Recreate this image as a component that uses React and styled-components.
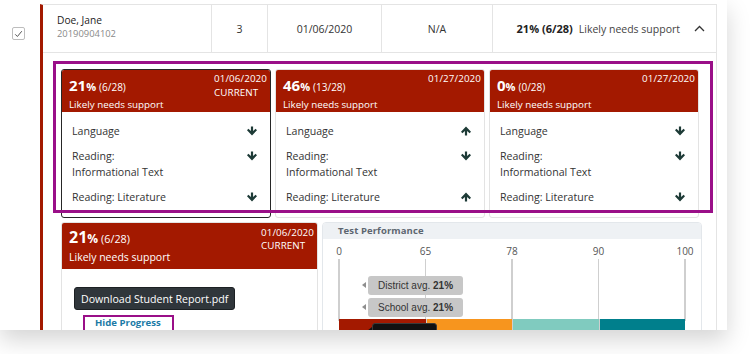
import React from 'react'
import styled, { createGlobalStyle } from 'styled-components'

const RED = '#a31900'
const PURPLE = '#9a0f88'

const GlobalStyle = createGlobalStyle`
  html, body { margin: 0; padding: 0; background: #fff; }
  body { font-family: "Open Sans", "Liberation Sans", sans-serif; color: #333; }
  * { box-sizing: border-box; }
`

const Screen = styled.div`
  width: 750px;
  height: 354px;
  overflow: hidden;
  background: #fff;
`

const Window = styled.div`
  width: 727px;
  height: 330px;
  overflow: hidden;
  background: #fff;
  box-shadow: 0 10px 22px rgba(0, 0, 0, 0.17);
  display: flex;
  padding-top: 4px;
`

const CheckCol = styled.div`
  width: 40px;
  flex: 0 0 40px;
  padding: 23px 0 0 12px;
`

const CheckBox = styled.div`
  width: 13px;
  height: 13px;
  border: 1px solid #bdbdbd;
  border-radius: 2px;
  display: flex;
  align-items: center;
  justify-content: center;
`

const Row = styled.div`
  width: 677px;
  flex: 0 0 677px;
  border-left: 3px solid ${RED};
  border-right: 1px solid #e4e4e4;
  border-top: 1px solid #e4e4e4;
`

const RowHeader = styled.div`
  display: flex;
  height: 48px;
  border-bottom: 1px solid #e4e4e4;
  font-size: 10.5px;
  color: #333;
`

const Cell = styled.div`
  width: ${p => p.$w}px;
  flex: 0 0 ${p => p.$w}px;
  border-right: 1px solid #e4e4e4;
  display: flex;
  align-items: center;
  justify-content: center;
`

const NameCell = styled(Cell)`
  flex-direction: column;
  align-items: flex-start;
  justify-content: flex-start;
  padding: 8px 0 0 14px;
`

const Name = styled.div`
  font-size: 10.2px;
  line-height: 14px;
  color: #222;
`

const StudentId = styled.div`
  font-size: 9.4px;
  line-height: 14px;
  color: #8a8a8a;
`

const ScoreCell = styled.div`
  flex: 1;
  display: flex;
  align-items: center;
  justify-content: flex-end;
  gap: 14px;
  padding-right: 11px;
`

const ScoreText = styled.div`
  color: #444;
  b { color: #222; font-weight: 700; font-size: 11px; margin-right: 6px; }
`

const Expanded = styled.div`
  padding: 16px 0 0 18px;
`

const CardsRow = styled.div`
  position: relative;
  display: flex;
  gap: 4px;
  width: max-content;
`

const Highlight = styled.div`
  position: absolute;
  top: -8px;
  left: -8px;
  right: -14px;
  bottom: 5px;
  border: 3px solid ${PURPLE};
  pointer-events: none;
`

const Card = styled.div`
  width: 210px;
  flex: 0 0 210px;
  border: ${p => (p.$selected ? '1.5px solid #262626' : '1px solid #e3e3e3')};
  border-radius: 3px;
  overflow: hidden;
  background: #fff;
`

const CardHead = styled.div`
  background: ${RED};
  color: #fff;
  display: flex;
  justify-content: space-between;
  padding: 1px 3px 0 7px;
  height: ${p => p.$h}px;
`

const HeadLeft = styled.div`
  padding-top: ${p => p.$top}px;
`

const Pct = styled.div`
  line-height: 18px;
  white-space: nowrap;
  b { font-size: ${p => p.$big}px; font-weight: 700; }
  i { font-style: normal; font-weight: 700; font-size: ${p => p.$big - 4}px; margin-right: 3px; }
  span { font-size: ${p => p.$small}px; }
`

const Status = styled.div`
  font-size: ${p => p.$size}px;
  line-height: 18px;
  white-space: nowrap;
`

const HeadRight = styled.div`
  font-size: 9.8px;
  line-height: ${p => p.$lh}px;
  padding-top: ${p => p.$top}px;
  letter-spacing: 0.1px;
`

const CardBody = styled.div`
  padding: 6px 13px 8px 10px;
`

const Skill = styled.div`
  display: flex;
  justify-content: space-between;
  align-items: flex-start;
  padding: 4.5px 0;
  font-size: 10.6px;
  line-height: 16px;
  color: #333;
  svg { margin-top: 3px; }
`

const BottomRow = styled.div`
  display: flex;
  gap: 4px;
  margin-top: 4px;
`

const SummaryCard = styled.div`
  width: 257px;
  flex: 0 0 257px;
  height: 120px;
  border: 1px solid #e3e3e3;
  border-radius: 3px;
  overflow: hidden;
`

const SummaryBody = styled.div`
  padding: 18px 0 0 12px;
`

const DownloadButton = styled.button`
  height: 23px;
  padding: 0 6px;
  background: #30363b;
  border: 1px solid #1c2023;
  border-radius: 3px;
  color: #fff;
  font-family: "Open Sans", sans-serif;
  font-size: 10.6px;
  display: block;
`

const HideLink = styled.div`
  margin: 5px 0 0 9px;
  width: 91px;
  height: 17px;
  border: 2.5px solid ${PURPLE};
  padding-left: 10px;
  color: #1b7aa6;
  font-weight: 700;
  font-size: 9.6px;
  line-height: 12px;
`

const PerfPanel = styled.div`
  width: 380px;
  flex: 0 0 380px;
  height: 120px;
  border: 1px solid #e3e7eb;
  border-radius: 4px;
  overflow: hidden;
`

const PerfHeader = styled.div`
  height: 16px;
  background: #eef1f4;
  padding-left: 15px;
  font-size: 9.5px;
  font-weight: 700;
  line-height: 16px;
  color: #5d6670;
  letter-spacing: 0.1px;
`

const Chart = styled.div`
  position: relative;
  margin-left: 16px;
  width: 346px;
  height: 110px;
`

const Tick = styled.div`
  position: absolute;
  left: ${p => p.$at}%;
  top: 6px;
  transform: translateX(-50%);
  font-size: 10px;
  line-height: 12px;
  color: #555;
`

const TickLine = styled.div`
  position: absolute;
  left: ${p => p.$at}%;
  top: 20px;
  height: 62px;
  width: 1.5px;
  margin-left: -0.75px;
  background: #cfcfcf;
`

const Bars = styled.div`
  position: absolute;
  top: 80px;
  left: 0;
  right: 0;
  height: 20px;
  display: grid;
  grid-template-columns: repeat(4, 1fr);
`

const Bar = styled.div`
  background: ${p => p.$color};
  border-left: ${p => (p.$first ? 'none' : '1.5px solid #cfcfcf')};
`

const AvgTag = styled.div`
  position: absolute;
  top: ${p => p.$top}px;
  left: 29px;
  height: 19px;
  padding: 0 10px;
  border-radius: 3px;
  background: #c7c7c7;
  font-family: "Liberation Sans", Arial, sans-serif;
  font-size: 10px;
  line-height: 19px;
  color: #333;
  white-space: nowrap;
  b { font-weight: 700; }
  &::before {
    content: '';
    position: absolute;
    left: -6px;
    top: 6px;
    border-top: 3.5px solid transparent;
    border-bottom: 3.5px solid transparent;
    border-right: 4px solid #8e8e8e;
  }
`

const Marker = styled.div`
  position: absolute;
  top: 84px;
  left: 33px;
  width: 65px;
  height: 24px;
  border-radius: 3px;
  background: #111;
  border: 1px solid #3a3a3a;
  &::before {
    content: '';
    position: absolute;
    left: -6px;
    top: 3px;
    border-top: 4px solid transparent;
    border-bottom: 4px solid transparent;
    border-right: 5px solid #111;
  }
`

const Arrow = ({ dir }) => (
  <svg width="10" height="10" viewBox="0 0 10 10" style={{ transform: dir === 'up' ? 'rotate(180deg)' : 'none' }}>
    <path d="M3.9 0.5h2.2v4.6L8.6 2.8 10 4.2 5 9.4 0 4.2 1.4 2.8 3.9 5.1z" fill="#1e3b37" />
  </svg>
)

const skills = [['Language'], ['Reading:', 'Informational Text'], ['Reading: Literature']]

const cards = [
  { pct: '21', frac: '(6/28)', date: '01/06/2020', current: true, arrows: ['down', 'down', 'down'] },
  { pct: '46', frac: '(13/28)', date: '01/27/2020', arrows: ['up', 'down', 'up'] },
  { pct: '0', frac: '(0/28)', date: '01/27/2020', arrows: ['down', 'down', 'down'] },
]

const ticks = [
  { label: '0', at: 0 },
  { label: '65', at: 25 },
  { label: '78', at: 50 },
  { label: '90', at: 75 },
  { label: '100', at: 100 },
]

const bars = ['#a31900', '#f7951e', '#80cbbf', '#007f8c']

export default function App() {
  return (
    <Screen>
      <GlobalStyle />
      <Window>
        <CheckCol>
          <CheckBox>
            <svg width="9" height="8" viewBox="0 0 9 8">
              <path d="M1.2 4.3l2.2 2.2L7.8 1.2" fill="none" stroke="#555" strokeWidth="1" />
            </svg>
          </CheckBox>
        </CheckCol>
        <Row>
          <RowHeader>
            <NameCell $w={169}>
              <Name>Doe, Jane</Name>
              <StudentId>20190904102</StudentId>
            </NameCell>
            <Cell $w={56}>3</Cell>
            <Cell $w={114}>01/06/2020</Cell>
            <Cell $w={111}>N/A</Cell>
            <ScoreCell>
              <ScoreText>
                <b>21% (6/28)</b>Likely needs support
              </ScoreText>
              <svg width="11" height="7" viewBox="0 0 11 7">
                <path d="M1 6l4.5-4.5L10 6" fill="none" stroke="#333" strokeWidth="1.3" />
              </svg>
            </ScoreCell>
          </RowHeader>

          <Expanded>
            <CardsRow>
              {cards.map((c, i) => (
                <Card key={i} $selected={c.current}>
                  <CardHead $h={42}>
                    <HeadLeft $top={5}>
                      <Pct $big={15} $small={10}>
                        <b>{c.pct}</b><i>%</i><span>{c.frac}</span>
                      </Pct>
                      <Status $size={9.8}>Likely needs support</Status>
                    </HeadLeft>
                    <HeadRight $lh={14} $top={1}>
                      <div>{c.date}</div>
                      {c.current && <div>CURRENT</div>}
                    </HeadRight>
                  </CardHead>
                  <CardBody>
                    {skills.map((s, j) => (
                      <Skill key={j}>
                        <div>
                          {s.map(line => <div key={line}>{line}</div>)}
                        </div>
                        <Arrow dir={c.arrows[j]} />
                      </Skill>
                    ))}
                  </CardBody>
                </Card>
              ))}
              <Highlight />
            </CardsRow>

            <BottomRow>
              <SummaryCard>
                <CardHead $h={46}>
                  <HeadLeft $top={4}>
                    <Pct $big={16} $small={10.8}>
                      <b>21</b><i>%</i><span>(6/28)</span>
                    </Pct>
                    <Status $size={10.5}>Likely needs support</Status>
                  </HeadLeft>
                  <HeadRight $lh={13} $top={2}>
                    <div>01/06/2020</div>
                    <div>CURRENT</div>
                  </HeadRight>
                </CardHead>
                <SummaryBody>
                  <DownloadButton>Download Student Report.pdf</DownloadButton>
                  <HideLink>Hide Progress</HideLink>
                </SummaryBody>
              </SummaryCard>

              <PerfPanel>
                <PerfHeader>Test Performance</PerfHeader>
                <Chart>
                  {ticks.map(t => (
                    <React.Fragment key={t.label}>
                      <Tick $at={t.at}>{t.label}</Tick>
                      <TickLine $at={t.at} />
                    </React.Fragment>
                  ))}
                  <AvgTag $top={37}>District avg. <b>21%</b></AvgTag>
                  <AvgTag $top={59}>School avg. <b>21%</b></AvgTag>
                  <Bars>
                    {bars.map((b, i) => <Bar key={b} $color={b} $first={i === 0} />)}
                  </Bars>
                  <Marker />
                </Chart>
              </PerfPanel>
            </BottomRow>
          </Expanded>
        </Row>
      </Window>
    </Screen>
  )
}
